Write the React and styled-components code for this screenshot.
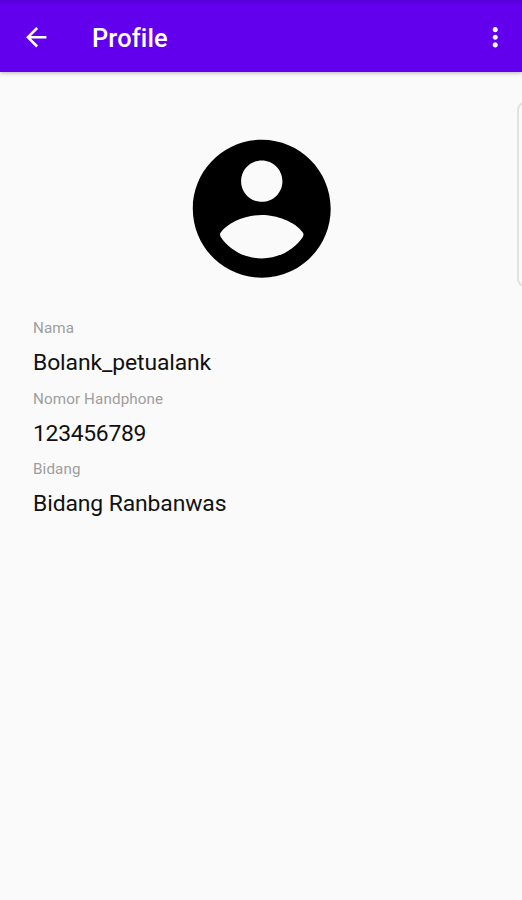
import React from "react";
import styled, { createGlobalStyle } from "styled-components";

const GlobalStyle = createGlobalStyle`
  body {
    margin: 0;
    background: #fafafa;
    font-family: Roboto, sans-serif;
  }
`;

const Container = styled.div`
  position: relative;
  display: flex;
  flex-direction: column;
  height: 900px;
  overflow: hidden;
  background: #fafafa;
`;

const Toolbar = styled.header`
  display: flex;
  align-items: center;
  box-sizing: border-box;
  height: 72px;
  padding: 2px 11.5px 0 21px;
  background: linear-gradient(#5600d8 0, #5b00e2 3px, #6200ee 5px);
  box-shadow: 0 1px 4px rgba(0, 0, 0, 0.28);
`;

const IconButton = styled.button`
  display: flex;
  margin-top: -0.5px;
  padding: 0;
  border: none;
  background: none;
  color: #fff;
  cursor: pointer;
`;

const Icon = styled.svg`
  width: ${(props) => props.$size}px;
  height: ${(props) => props.$size}px;
  fill: currentColor;
`;

const Title = styled.h1`
  flex: 1;
  margin: 2px 0 0 40.5px;
  font-size: 25.4px;
  font-weight: 500;
  line-height: 30px;
  letter-spacing: 0.15px;
  color: #fff;
`;

const Avatar = styled.div`
  display: flex;
  justify-content: center;
  margin-top: 54px;
  padding-left: 1.5px;
  color: #000;
`;

const Fields = styled.dl`
  display: flex;
  flex-direction: column;
  gap: 11.7px;
  margin: 26.6px 0 0;
  padding: 0 33px;
`;

const Field = styled.div`
  display: flex;
  flex-direction: column;
  gap: 11px;
`;

const Label = styled.dt`
  font-size: 15.2px;
  line-height: 20px;
  letter-spacing: 0.12px;
  color: #9e9e9e;
`;

const Value = styled.dd`
  margin: 0;
  font-size: 22.9px;
  line-height: 28px;
  letter-spacing: ${(props) => (props.$numeric ? "-0.3px" : "-0.1px")};
  color: #111;
`;

// edge panel handle, mostly off the right side of the screen
const EdgeHandle = styled.div`
  position: absolute;
  top: 102px;
  right: -12px;
  box-sizing: border-box;
  width: 17px;
  height: 185px;
  border: 2px solid #e2e2e2;
  border-radius: 8px;
`;

const fields = [
  { label: "Nama", value: "Bolank_petualank" },
  { label: "Nomor Handphone", value: "123456789", numeric: true },
  { label: "Bidang", value: "Bidang Ranbanwas" },
];

const App = () => {
  return (
    <Container>
      <GlobalStyle />
      <Toolbar>
        <IconButton aria-label="Back">
          <Icon $size={30.5} viewBox="0 0 24 24">
            <path d="M20 11H7.83l5.59-5.59L12 4l-8 8 8 8 1.41-1.41L7.83 13H20v-2z" />
          </Icon>
        </IconButton>
        <Title>Profile</Title>
        <IconButton aria-label="More options">
          <Icon $size={30.5} viewBox="0 0 24 24">
            <path d="M12 8c1.1 0 2-.9 2-2s-.9-2-2-2-2 .9-2 2 .9 2 2 2zm0 2c-1.1 0-2 .9-2 2s.9 2 2 2 2-.9 2-2-.9-2-2-2zm0 6c-1.1 0-2 .9-2 2s.9 2 2 2 2-.9 2-2-.9-2-2-2z" />
          </Icon>
        </IconButton>
      </Toolbar>
      <Avatar>
        <Icon $size={165.5} viewBox="0 0 24 24">
          <path d="M12 2C6.48 2 2 6.48 2 12s4.48 10 10 10 10-4.48 10-10S17.52 2 12 2zm0 3c1.66 0 3 1.34 3 3s-1.34 3-3 3-3-1.34-3-3 1.34-3 3-3zm0 14.2c-2.5 0-4.71-1.28-5.95-3.12q-.2-.35 0-.65C7.2 13.85 9.85 12.9 12 12.9s4.8.95 5.95 2.53q.2.3 0 .65C16.71 17.92 14.5 19.2 12 19.2z" />
        </Icon>
      </Avatar>
      <Fields>
        {fields.map((field) => (
          <Field key={field.label}>
            <Label>{field.label}</Label>
            <Value $numeric={field.numeric}>{field.value}</Value>
          </Field>
        ))}
      </Fields>
      <EdgeHandle />
    </Container>
  );
};

export default App;
